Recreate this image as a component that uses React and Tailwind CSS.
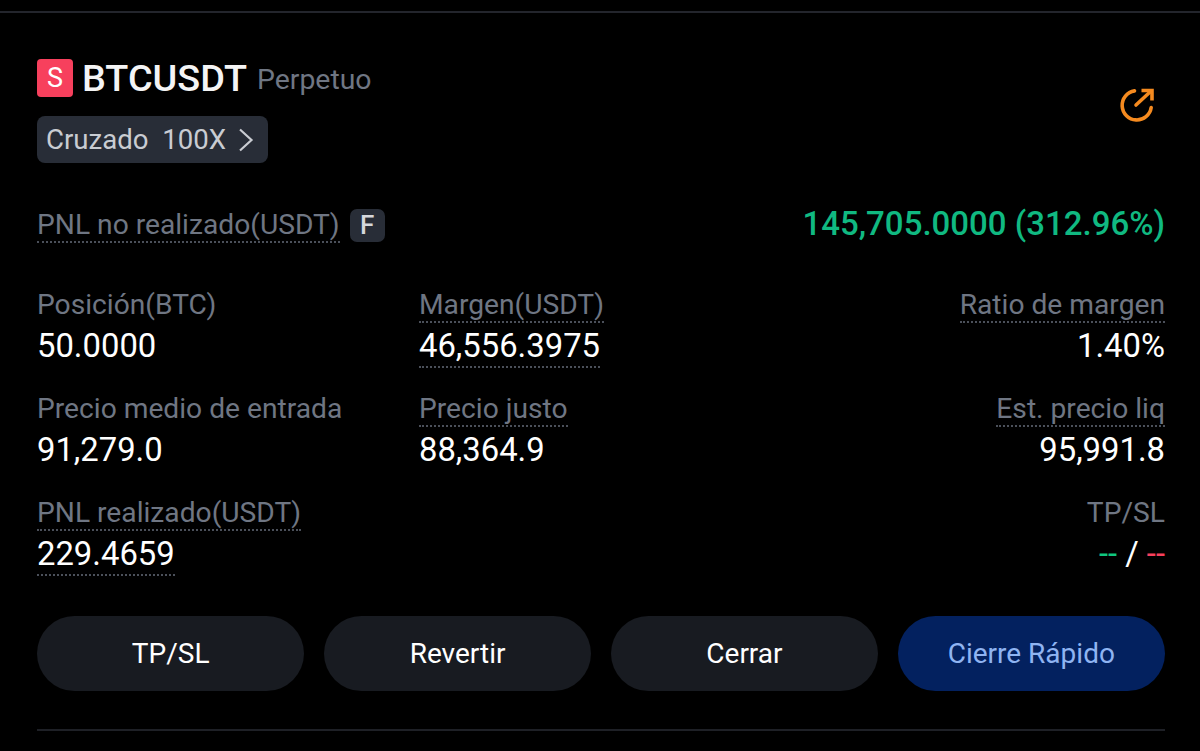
const Label = ({ children, dotted, className = "" }) => (
  <div className={`h-[35px] ${className}`}>
    <span className={`inline-block text-[28.2px] leading-[33px] text-[#6f7683] ${dotted ? "border-b-2 border-dotted border-[#4b505a]" : ""}`}>{children}</span>
  </div>
);

const Value = ({ children, dotted, className = "" }) => (
  <div className={`h-[69px] pt-[4px] ${className}`}>
    <span className={`inline-block text-[32.8px] leading-[38px] text-white ${dotted ? "border-b-2 border-dotted border-[#4b505a] pb-[1px]" : ""}`}>{children}</span>
  </div>
);

const Cell = ({ label, value, labelDotted, valueDotted, right }) => (
  <div className={right ? "text-right" : ""}>
    <Label dotted={labelDotted}>{label}</Label>
    <Value dotted={valueDotted}>{value}</Value>
  </div>
);

const ShareIcon = () => (
  <svg width="36" height="36" viewBox="0 0 36 36" fill="none" stroke="#f58a1f" strokeWidth="3.6">
    <path d="M15.5 3.9A14.6 14.6 0 1 0 32.2 20.5" strokeLinecap="round" />
    <path d="M17 18 L31 5" strokeLinecap="round" />
    <path d="M22.5 3.5 H33 V13.5" />
  </svg>
);

const Button = ({ children, primary }) => (
  <button className={`h-[75px] flex-1 rounded-full text-[28px] ${primary ? "bg-[#03215f] text-[#8fb4f2]" : "bg-[#181b21] text-white"}`}>
    {children}
  </button>
);

export default function App() {
  return (
    <div className="h-[751px] w-[1200px] overflow-hidden bg-black pt-[11px] font-['Roboto',sans-serif]">
      <div className="h-[2px] bg-[#23252c]" />
      <div className="pt-[46px] pr-[35px] pl-[37px]">
        <div className="flex items-start justify-between">
          <div>
            <div className="flex h-[38px] items-center">
              <span className="flex h-[38px] w-[36px] items-center justify-center rounded-[4px] bg-[#f7405d] text-[27px] text-white">S</span>
              <span className="ml-[9px] text-[37.8px] leading-[38px] font-medium text-[#f4f4f5]">BTCUSDT</span>
              <span className="mt-[3px] ml-[10px] text-[28.4px] leading-[33px] text-[#6f7683]">Perpetuo</span>
            </div>
            <div className="mt-[19px] flex h-[47px] w-[231px] items-center gap-[12px] rounded-[8px] bg-[#282d37] pl-[9px] text-[27.6px] text-[#c9ccd2]">
              <span className="whitespace-pre">Cruzado  100X</span>
              <svg width="16" height="24" viewBox="0 0 16 24" fill="none" stroke="#c9ccd2" strokeWidth="2.2"><path d="M2 1.5 L13.5 12 L2 22.5" /></svg>
            </div>
          </div>
          <div className="mt-[28px] mr-[10px]"><ShareIcon /></div>
        </div>

        <div className="mt-[45px] flex h-[35px] items-center justify-between">
          <div className="flex items-center gap-[10px]">
            <span className="border-b-2 border-dotted border-[#4b505a] text-[28.2px] leading-[33px] text-[#6f7683]">PNL no realizado(USDT)</span>
            <span className="flex h-[33px] w-[35px] items-center justify-center rounded-[7px] bg-[#282d37] text-[26px] font-medium text-[#d5d7db]">F</span>
          </div>
          <span className="mt-[-3px] text-[33px] font-medium text-[#10b981]">145,705.0000 (312.96%)</span>
        </div>

        <div className="mt-[45px] grid grid-cols-[382px_1fr_auto]">
          <Cell label="Posición(BTC)" value="50.0000" />
          <Cell label="Margen(USDT)" value="46,556.3975" labelDotted valueDotted />
          <Cell label="Ratio de margen" value="1.40%" labelDotted right />
          <Cell label="Precio medio de entrada" value="91,279.0" />
          <Cell label="Precio justo" value="88,364.9" labelDotted />
          <Cell label="Est. precio liq" value="95,991.8" labelDotted right />
          <Cell label="PNL realizado(USDT)" value="229.4659" labelDotted valueDotted />
          <div />
          <Cell
            label="TP/SL"
            right
            value={<><span className="text-[#10c77f]">--</span> / <span className="text-[#f7405d]">--</span></>}
          />
        </div>

        <div className="mt-[16px] flex gap-[19.5px]">
          <Button>TP/SL</Button>
          <Button>Revertir</Button>
          <Button>Cerrar</Button>
          <Button primary>Cierre Rápido</Button>
        </div>
        <div className="mt-[38px] h-[2px] bg-[#1e2026]" />
      </div>
    </div>
  );
}
